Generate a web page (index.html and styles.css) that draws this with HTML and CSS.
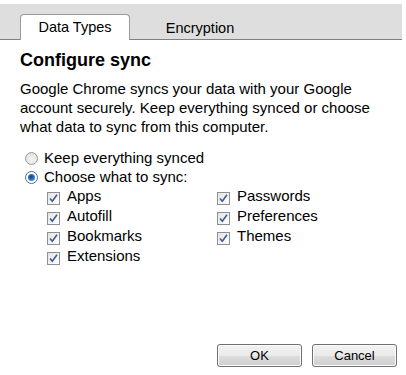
FILE: index.html
```html
<!DOCTYPE html>
<html>
<head>
<meta charset="utf-8">
<link rel="stylesheet" href="styles.css">
</head>
<body>
<div class="page">
  <div class="tabbar">
    <div class="tab active">Data Types</div>
    <div class="tab">Encryption</div>
  </div>
  <div class="content">
    <h1 class="title">Configure sync</h1>
    <p class="desc">Google Chrome syncs your data with your Google account securely. Keep everything synced or choose what data to sync from this computer.</p>
    <div class="radio-row">
      <span class="radio"></span>
      <span>Keep everything synced</span>
    </div>
    <div class="radio-row second">
      <span class="radio checked"><span class="dot"></span></span>
      <span>Choose what to sync:</span>
    </div>
    <div class="checks">
      <div class="check-row"><span class="cb"><svg width="9" height="9" viewBox="0 0 9 9"><path d="M1 4.5 L3.3 7.3 L8 0.8" fill="none" stroke="#3d5a9c" stroke-width="1.6"/></svg></span><span>Apps</span></div>
      <div class="check-row"><span class="cb"><svg width="9" height="9" viewBox="0 0 9 9"><path d="M1 4.5 L3.3 7.3 L8 0.8" fill="none" stroke="#3d5a9c" stroke-width="1.6"/></svg></span><span>Passwords</span></div>
      <div class="check-row"><span class="cb"><svg width="9" height="9" viewBox="0 0 9 9"><path d="M1 4.5 L3.3 7.3 L8 0.8" fill="none" stroke="#3d5a9c" stroke-width="1.6"/></svg></span><span>Autofill</span></div>
      <div class="check-row"><span class="cb"><svg width="9" height="9" viewBox="0 0 9 9"><path d="M1 4.5 L3.3 7.3 L8 0.8" fill="none" stroke="#3d5a9c" stroke-width="1.6"/></svg></span><span>Preferences</span></div>
      <div class="check-row"><span class="cb"><svg width="9" height="9" viewBox="0 0 9 9"><path d="M1 4.5 L3.3 7.3 L8 0.8" fill="none" stroke="#3d5a9c" stroke-width="1.6"/></svg></span><span>Bookmarks</span></div>
      <div class="check-row"><span class="cb"><svg width="9" height="9" viewBox="0 0 9 9"><path d="M1 4.5 L3.3 7.3 L8 0.8" fill="none" stroke="#3d5a9c" stroke-width="1.6"/></svg></span><span>Themes</span></div>
      <div class="check-row"><span class="cb"><svg width="9" height="9" viewBox="0 0 9 9"><path d="M1 4.5 L3.3 7.3 L8 0.8" fill="none" stroke="#3d5a9c" stroke-width="1.6"/></svg></span><span>Extensions</span></div>
    </div>
  </div>
  <div class="footer">
    <button class="btn ok">OK</button>
    <button class="btn cancel">Cancel</button>
  </div>
</div>
</body>
</html>
```
FILE: styles.css
```css
html, body {
  margin: 0;
  padding: 0;
  background: #fff;
}
body {
  font-family: "Liberation Sans", Arial, sans-serif;
  color: #000;
  font-size: 15px;
}
.page {
  display: flex;
  flex-direction: column;
  height: 375px;
  box-sizing: border-box;
  padding-top: 4px;
}
.tabbar {
  margin-right: 4px;
  height: 36px;
  background: #dedede;
  border-bottom: 1px solid #808080;
  box-sizing: border-box;
  display: flex;
  align-items: flex-end;
  padding-left: 20px;
}
.tab {
  height: 25px;
  box-sizing: border-box;
  font-size: 14.5px;
  line-height: 24px;
  text-align: center;
  width: 140px;
  margin-bottom: -1px;
  padding-top: 1px;
}
.tab.active {
  width: 110px;
  background: #fff;
  border: 1px solid #9a9a9a;
  border-bottom: none;
  border-radius: 4px 4px 0 0;
  height: 26px;
  padding-top: 0;
}
.content {
  padding: 0 20px;
}
.title {
  margin: 9px 0 0;
  font-size: 18px;
  line-height: 22px;
  font-weight: bold;
}
.desc {
  margin: 8px 0 0;
  line-height: 19px;
}
.radio-row {
  display: flex;
  align-items: flex-start;
  height: 19px;
  line-height: 19px;
  padding-left: 5px;
  gap: 6px;
  margin-top: 12px;
}
.radio-row.second {
  margin-top: 0;
}
.radio {
  width: 13px;
  height: 13px;
  box-sizing: border-box;
  border-radius: 50%;
  border: 1px solid #9c9c9c;
  background: radial-gradient(circle at 50% 60%, #f4f4f4 0%, #dcdcdc 100%);
  margin-top: 4px;
  display: flex;
  align-items: center;
  justify-content: center;
  flex: none;
}
.radio.checked {
  border-color: #5a6d8c;
  background: #fff;
}
.dot {
  width: 7px;
  height: 7px;
  border-radius: 50%;
  background: radial-gradient(circle at 45% 40%, #1b3c6b 0%, #2b6fc2 45%, #5db0f0 100%);
}
.checks {
  display: grid;
  grid-template-columns: 170px auto;
  padding-left: 27px;
}
.check-row {
  display: flex;
  align-items: flex-start;
  gap: 7px;
  height: 20px;
  line-height: 20px;
}
.cb {
  width: 13px;
  height: 13px;
  box-sizing: border-box;
  border: 1px solid #8e8f8f;
  background: linear-gradient(135deg, #e3e3e3 0%, #f7f7f7 70%, #ffffff 100%);
  margin-top: 6px;
  display: flex;
  align-items: center;
  justify-content: center;
  flex: none;
}
.cb svg {
  display: block;
}
.footer {
  margin-top: auto;
  display: flex;
  justify-content: flex-end;
  gap: 10px;
  padding: 0 9px 8px 0;
}
.btn {
  font-family: "Liberation Sans", Arial, sans-serif;
  font-size: 13px;
  color: #000;
  height: 23px;
  padding: 0;
  border: 1px solid #707070;
  border-radius: 3px;
  background: linear-gradient(#f2f2f2 0%, #ebebeb 50%, #dddddd 51%, #cfcfcf 100%);
  box-shadow: inset 0 0 0 1px #fcfcfc;
}
.btn.ok {
  width: 85px;
}
.btn.cancel {
  width: 85px;
}
```
